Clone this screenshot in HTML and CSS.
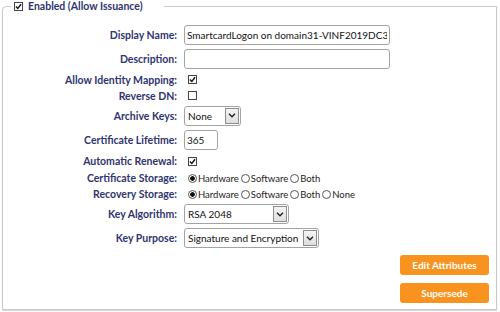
FILE: index.html
```html
<!DOCTYPE html>
<html>
<head>
<meta charset="utf-8">
<link rel="stylesheet" href="styles.css">
</head>
<body>
<fieldset class="panel">
  <legend class="legend">
    <span class="cb"><svg viewBox="0 0 9 9" width="7" height="7"><path d="M1.2 4.6 L3.6 7 L7.8 1.6" fill="none" stroke="#111" stroke-width="1.8"/></svg></span>
    <span class="legend-text">Enabled (Allow Issuance)</span>
  </legend>
  <div class="form">
    <div class="row r24"><label class="lbl">Display Name:</label><input class="txt w-name" type="text" value="SmartcardLogon on domain31-VINF2019DC3"></div>
    <div class="row r24"><label class="lbl">Description:</label><input class="txt w-name" type="text" value=""></div>
    <div class="row r17"><label class="lbl">Allow Identity Mapping:</label><span class="cb cb-field"><svg viewBox="0 0 9 9" width="7" height="7"><path d="M1.2 4.6 L3.6 7 L7.8 1.6" fill="none" stroke="#111" stroke-width="1.8"/></svg></span></div>
    <div class="row r15"><label class="lbl">Reverse DN:</label><span class="cb cb-field"></span></div>
    <div class="row r25"><label class="lbl">Archive Keys:</label>
      <span class="sel w-ak"><span class="sel-val">None</span><span class="arrow"><svg viewBox="0 0 14 15" width="14" height="15"><path d="M3.5 5.5 L7 9 L10.5 5.5" fill="none" stroke="#222" stroke-width="1.6"/></svg></span></span>
    </div>
    <div class="row r24"><label class="lbl">Certificate Lifetime:</label><input class="txt w-life" type="text" value="365"></div>
    <div class="row r18"><label class="lbl">Automatic Renewal:</label><span class="cb cb-field"><svg viewBox="0 0 9 9" width="7" height="7"><path d="M1.2 4.6 L3.6 7 L7.8 1.6" fill="none" stroke="#111" stroke-width="1.8"/></svg></span></div>
    <div class="row r16"><label class="lbl">Certificate Storage:</label>
      <span class="radios">
        <label class="opt"><input class="rad" type="radio" name="cs" checked>Hardware</label>
        <label class="opt"><input class="rad" type="radio" name="cs">Software</label>
        <label class="opt"><input class="rad" type="radio" name="cs">Both</label>
      </span>
    </div>
    <div class="row r16"><label class="lbl">Recovery Storage:</label>
      <span class="radios">
        <label class="opt"><input class="rad" type="radio" name="rs" checked>Hardware</label>
        <label class="opt"><input class="rad" type="radio" name="rs">Software</label>
        <label class="opt"><input class="rad" type="radio" name="rs">Both</label>
        <label class="opt"><input class="rad" type="radio" name="rs">None</label>
      </span>
    </div>
    <div class="row r24"><label class="lbl">Key Algorithm:</label>
      <span class="sel w-alg"><span class="sel-val">RSA 2048</span><span class="arrow"><svg viewBox="0 0 14 15" width="14" height="15"><path d="M3.5 5.5 L7 9 L10.5 5.5" fill="none" stroke="#222" stroke-width="1.6"/></svg></span></span>
    </div>
    <div class="row r24"><label class="lbl">Key Purpose:</label>
      <span class="sel w-kp"><span class="sel-val">Signature and Encryption</span><span class="arrow"><svg viewBox="0 0 14 15" width="14" height="15"><path d="M3.5 5.5 L7 9 L10.5 5.5" fill="none" stroke="#222" stroke-width="1.6"/></svg></span></span>
    </div>
  </div>
  <div class="actions">
    <button class="btn" type="button">Edit Attributes</button>
    <button class="btn" type="button">Supersede</button>
  </div>
</fieldset>
</body>
</html>
```
FILE: styles.css
```css
html, body {
  margin: 0;
  padding: 0;
  background: #fff;
}
body {
  font-family: Lato, "Open Sans", sans-serif;
  color: #222;
  width: 500px;
  height: 312px;
  overflow: hidden;
}
.panel {
  margin: 0 3px 0 2px;
  padding: 0 7px 5px 0;
  border: 1px solid #c9c9c9;
  border-radius: 4px 0 0 0;
  box-shadow: 0 1px 1px #d4d4d4;
  min-width: 0;
  height: 310px;
  box-sizing: border-box;
}
.legend {
  margin-left: 8px;
  padding: 0 21px 0 3px;
  height: 12px;
  line-height: 12px;
  display: flex;
  align-items: center;
}
.legend-text {
  font-weight: bold;
  font-size: 10.5px;
  color: #2f3570;
  margin-left: 5px;
}
.cb {
  display: inline-flex;
  align-items: center;
  justify-content: center;
  width: 7px;
  height: 7px;
  border: 1px solid #444;
  background: #fff;
  box-sizing: content-box;
}
.cb svg { display: block; }
.cb-field {
  margin-left: 4px;
}
.form {
  padding-top: 11px;
  display: flex;
  flex-direction: column;
}
.row {
  display: flex;
  align-items: center;
}
.r24 { height: 24px; }
.r25 { height: 25px; }
.r17 { height: 17px; }
.r15 { height: 15px; }
.r16 { height: 16px; }
.r18 { height: 18px; }
.lbl {
  width: 174px;
  text-align: right;
  font-weight: bold;
  font-size: 10.5px;
  color: #2f3570;
  margin-right: 7px;
  white-space: nowrap;
}
.txt {
  font-family: Lato, "Open Sans", sans-serif;
  font-size: 10px;
  color: #111;
  height: 20px;
  box-sizing: border-box;
  border: 1px solid #a3a3a3;
  border-radius: 3px;
  padding: 0 2px;
  margin: 0;
  outline: none;
  background: #fff;
}
.w-name { width: 206px; }
.w-life { width: 34px; }
.sel {
  position: relative;
  display: flex;
  align-items: center;
  height: 20px;
  box-sizing: border-box;
  border: 1px solid #a3a3a3;
  border-radius: 3px;
  padding: 0 3px;
  font-size: 10px;
  color: #111;
  background: #fff;
}
.sel-val { white-space: nowrap; }
.arrow {
  position: absolute;
  right: 1px;
  top: 1px;
  width: 14px;
  height: 16px;
  box-sizing: border-box;
  border: 1px solid #8d8d8d;
  background: linear-gradient(#f4f4f4, #dedede);
  display: flex;
  align-items: center;
  justify-content: center;
}
.arrow svg { display: block; }
.w-ak { width: 57px; }
.w-alg { width: 105px; }
.w-kp { width: 135px; }
.radios {
  display: flex;
  align-items: center;
  font-size: 9.5px;
  color: #222;
}
.opt {
  display: inline-flex;
  align-items: center;
  margin-right: 2px;
}
.rad {
  appearance: none;
  -webkit-appearance: none;
  width: 9px;
  height: 9px;
  border: 1px solid #555;
  border-radius: 50%;
  margin: 0 1px 0 0;
  background: #fff;
  box-sizing: border-box;
}
.radios .opt:first-child .rad { margin-left: 4px; }
.rad:checked {
  background: radial-gradient(circle, #111 0 2px, #fff 2.6px);
}
.actions {
  display: flex;
  flex-direction: column;
  align-items: flex-end;
  gap: 8px;
  margin-top: 5px;
}
.btn {
  width: 89px;
  height: 20px;
  border: none;
  border-radius: 3px;
  background: #f7931e;
  color: #fff;
  font-family: Lato, "Open Sans", sans-serif;
  font-weight: bold;
  font-size: 10px;
  padding: 0;
  margin: 0;
}
```
